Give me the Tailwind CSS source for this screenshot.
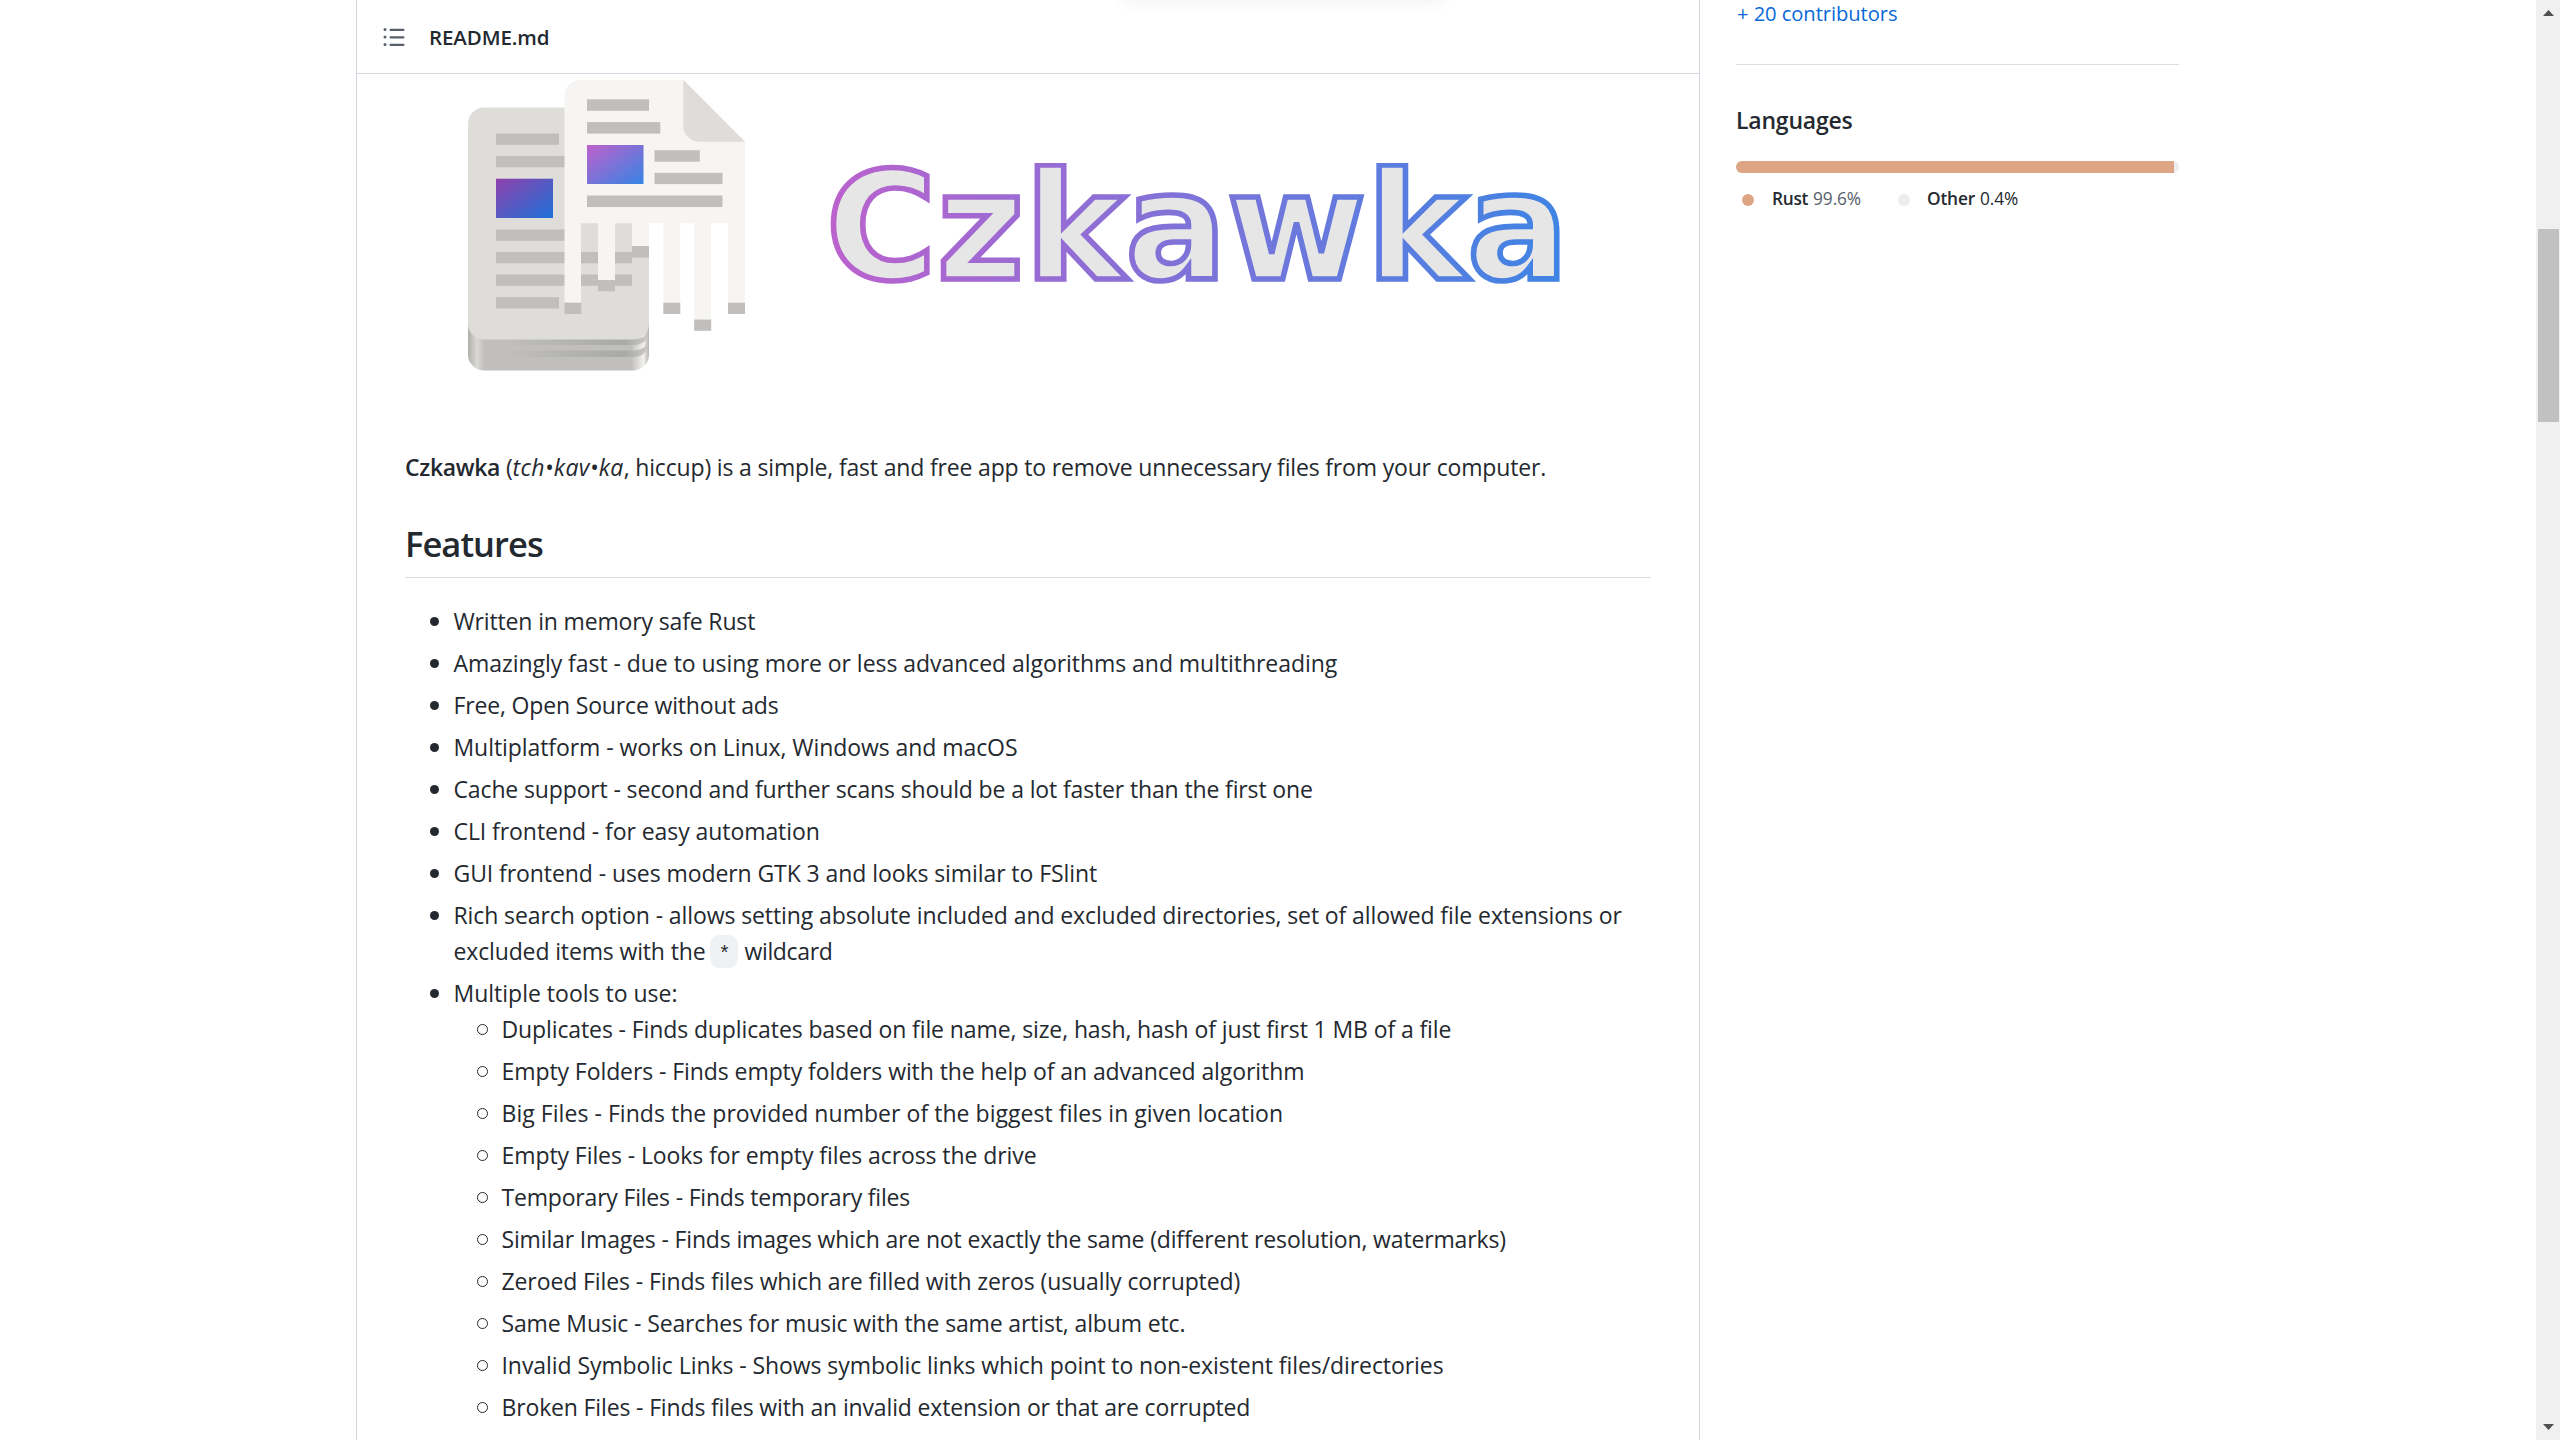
<!DOCTYPE html>
<html lang="en">
<head>
<meta charset="utf-8">
<title>README.md</title>
<script src="https://cdn.jsdelivr.net/npm/@tailwindcss/browser@4"></script>
</head>
<body class="relative flex h-[1440px] w-[2560px] overflow-hidden bg-white font-['Open_Sans','Noto_Sans',sans-serif] text-[#24292f]">
  <!-- shadow cast by a bar above the page -->
  <div class="absolute left-[1122px] -top-[20px] h-[18px] w-[322px] shadow-[0_2px_16px_rgba(0,0,0,0.07)]"></div>

  <main class="ml-[356px] h-full w-[1344px] shrink-0 border-x border-[#d0d7de]">
    <header class="flex h-[74px] items-center border-b border-[#d0d7de] pl-[25px]">
      <svg class="h-6 w-6 fill-[#57606a]" viewBox="0 0 16 16"><path d="M2 4a1 1 0 100-2 1 1 0 000 2zm3.75-1.5a.75.75 0 000 1.5h8.5a.75.75 0 000-1.5h-8.5zm0 5a.75.75 0 000 1.5h8.5a.75.75 0 000-1.5h-8.5zm0 5a.75.75 0 000 1.5h8.5a.75.75 0 000-1.5h-8.5zM3 8a1 1 0 11-2 0 1 1 0 012 0zm-1 6a1 1 0 100-2 1 1 0 000 2z"/></svg>
      <h2 class="mt-px ml-[23px] text-[20.5px] font-semibold tracking-[-0.12px]">README.md</h2>
    </header>

    <svg class="block h-[374px] w-[1342px]" viewBox="357 74 1342 374">
      <defs>
        <linearGradient id="front" x1="0" y1="0" x2="1" y2="1"><stop offset="0" stop-color="#c061cb"/><stop offset="1" stop-color="#3584e4"/></linearGradient>
        <linearGradient id="back" x1="0" y1="0" x2="1" y2="1"><stop offset="0" stop-color="#9141ac"/><stop offset="1" stop-color="#1c71d8"/></linearGradient>
        <linearGradient id="word" gradientUnits="userSpaceOnUse" x1="832" y1="0" x2="1560" y2="0"><stop offset="0" stop-color="#bb62cd"/><stop offset="1" stop-color="#3f84e4"/></linearGradient>
        <linearGradient id="edge" gradientUnits="userSpaceOnUse" x1="468" y1="0" x2="649" y2="0"><stop offset="0" stop-color="#b0b0ac"/><stop offset=".05" stop-color="#dad9d5"/><stop offset=".09" stop-color="#c0bfbb"/><stop offset=".9" stop-color="#c0bfbb"/><stop offset=".97" stop-color="#f2f1ee"/><stop offset="1" stop-color="#b4b3af"/></linearGradient>
        <linearGradient id="page" gradientUnits="userSpaceOnUse" x1="505" y1="0" x2="646" y2="0"><stop offset="0" stop-color="#a9a9a5" stop-opacity="0"/><stop offset=".85" stop-color="#a9a9a5"/><stop offset="1" stop-color="#c8c7c4"/></linearGradient>
        <clipPath id="cap"><rect x="820" y="163" width="760" height="130"/></clipPath>
      </defs>
      <path d="M468 315H649V354.500A16 16 0 0 1 633 370.500H484A16 16 0 0 1 468 354.500Z" fill="url(#edge)"/>
      <path d="M500 339H634Q644 339 647 333V338Q643 345 634 345H500Z" fill="url(#page)"/>
      <path d="M500 350.500H634Q643 350 647 344V349Q643 357 634 357H500Z" fill="url(#page)"/>
      <path d="M484 107.500H633A16 16 0 0 1 649 123.500V323.500A16 16 0 0 1 633 339.500H484A16 16 0 0 1 468 323.500V123.500A16 16 0 0 1 484 107.500Z" fill="#deddda"/>
      <g fill="#c0bfbc">
        <rect x="496" y="133.500" width="63" height="11.300"/><rect x="496" y="156" width="80" height="11.300"/>
        <rect x="496" y="229.500" width="80" height="11.300"/><rect x="496" y="252" width="136" height="11.300"/>
        <rect x="496" y="274.500" width="136" height="11.300"/><rect x="496" y="297.200" width="63" height="11.300"/>
      </g>
      <rect x="496" y="178.700" width="57" height="39.300" fill="url(#back)"/>
      <path d="M580.500 79.700H683.300L745 141.700V302.700H728V223.300H711V319.300H694.200V223.300H680.200V302.700H663.300V223.300H649V246H632V223.300H615V280H598V223.300H581V302.700H564.500V95.700A16 16 0 0 1 580.500 79.700Z" fill="#f6f5f4"/>
      <path d="M683.300 79.700L745 141.700H699.300A16 16 0 0 1 683.300 125.700Z" fill="#deddda"/>
      <g fill="#c0bfbc">
        <rect x="587" y="99.300" width="62" height="11.500"/><rect x="587" y="122.100" width="73.300" height="11.500"/>
        <rect x="654.500" y="150.200" width="45.300" height="11.500"/><rect x="654.500" y="172.800" width="68" height="11.300"/>
        <rect x="587" y="195.500" width="135.500" height="11.500"/>
        <rect x="564.500" y="302.700" width="16.800" height="11.300"/><rect x="598" y="280" width="17" height="11.300"/>
        <rect x="632" y="246" width="17" height="11.500"/><rect x="663.300" y="302.700" width="17" height="11.300"/>
        <rect x="694.200" y="319.500" width="17" height="11.300"/><rect x="728" y="302.700" width="17" height="11.300"/>
      </g>
      <rect x="587" y="145" width="56.500" height="39" fill="url(#front)"/>
      <text x="826" y="278.500" class="font-['DejaVu_Sans',sans-serif] text-[150.5px] font-bold tracking-[0.35px]" fill="#e6e6e6" stroke="url(#word)" stroke-width="5.600" clip-path="url(#cap)">Czkawka</text>
    </svg>

    <article class="w-[1294px] pl-12 text-[23px] leading-9">
      <p class="pt-px tracking-[-0.17px]"><b class="font-semibold tracking-[-0.32px]">Czkawka</b> (<i class="tracking-[0.35px]">tch•kav•ka</i>, hiccup) is a simple, fast and free app to remove unnecessary files from your computer.</p>
      <h2 class="mt-9 h-[57px] border-b border-[#d8dee4] text-[34.500px] leading-[45px] font-semibold tracking-[-0.95px]">Features</h2>
      <ul class="mt-[25px] flex w-[1250px] flex-col gap-1.5 pl-[48.5px] whitespace-nowrap">
        <li class="relative tracking-[-0.15px] before:absolute before:-left-[23.5px] before:top-[14px] before:size-[9px] before:rounded-full before:bg-[#24292f]">Written in memory safe Rust</li>
        <li class="relative tracking-[-0.05px] before:absolute before:-left-[23.5px] before:top-[14px] before:size-[9px] before:rounded-full before:bg-[#24292f]">Amazingly fast - due to using more or less advanced algorithms and multithreading</li>
        <li class="relative tracking-[-0.16px] before:absolute before:-left-[23.5px] before:top-[14px] before:size-[9px] before:rounded-full before:bg-[#24292f]">Free, Open Source without ads</li>
        <li class="relative tracking-[-0.07px] before:absolute before:-left-[23.5px] before:top-[14px] before:size-[9px] before:rounded-full before:bg-[#24292f]">Multiplatform - works on Linux, Windows and macOS</li>
        <li class="relative tracking-[-0.135px] before:absolute before:-left-[23.5px] before:top-[14px] before:size-[9px] before:rounded-full before:bg-[#24292f]">Cache support - second and further scans should be a lot faster than the first one</li>
        <li class="relative tracking-[-0.07px] before:absolute before:-left-[23.5px] before:top-[14px] before:size-[9px] before:rounded-full before:bg-[#24292f]">CLI frontend - for easy automation</li>
        <li class="relative tracking-[-0.08px] before:absolute before:-left-[23.5px] before:top-[14px] before:size-[9px] before:rounded-full before:bg-[#24292f]">GUI frontend - uses modern GTK 3 and looks similar to FSlint</li>
        <li class="relative h-[72px] tracking-[-0.1px] before:absolute before:-left-[23.5px] before:top-[14px] before:size-[9px] before:rounded-full before:bg-[#24292f]">Rich search option - allows setting absolute included and excluded directories, set of allowed file extensions or<br>
          <span class="flex items-center tracking-[-0.14px]"><span>excluded items with the</span><code class="mr-[6px] ml-[5px] flex h-[33px] w-7 items-center justify-center rounded-[9px] bg-[#eff1f3] pt-[7px] font-['Liberation_Mono',monospace] text-[20px] leading-none">*</code><span class="tracking-[-0.35px]">wildcard</span></span></li>
        <li class="relative before:absolute before:-left-[23.5px] before:top-[14px] before:size-[9px] before:rounded-full before:bg-[#24292f]">Multiple tools to use:
          <ul class="flex flex-col gap-1.5 pl-12">
            <li class="relative tracking-[-0.11px] before:absolute before:-left-[24.5px] before:top-[13px] before:size-[11px] before:rounded-full before:border before:border-[#24292f]">Duplicates - Finds duplicates based on file name, size, hash, hash of just first 1 MB of a file</li>
            <li class="relative tracking-[-0.08px] before:absolute before:-left-[24.5px] before:top-[13px] before:size-[11px] before:rounded-full before:border before:border-[#24292f]">Empty Folders - Finds empty folders with the help of an advanced algorithm</li>
            <li class="relative tracking-[0.045px] before:absolute before:-left-[24.5px] before:top-[13px] before:size-[11px] before:rounded-full before:border before:border-[#24292f]">Big Files - Finds the provided number of the biggest files in given location</li>
            <li class="relative tracking-[-0.08px] before:absolute before:-left-[24.5px] before:top-[13px] before:size-[11px] before:rounded-full before:border before:border-[#24292f]">Empty Files - Looks for empty files across the drive</li>
            <li class="relative tracking-[-0.19px] before:absolute before:-left-[24.5px] before:top-[13px] before:size-[11px] before:rounded-full before:border before:border-[#24292f]">Temporary Files - Finds temporary files</li>
            <li class="relative tracking-[-0.155px] before:absolute before:-left-[24.5px] before:top-[13px] before:size-[11px] before:rounded-full before:border before:border-[#24292f]">Similar Images - Finds images which are not exactly the same (different resolution, watermarks)</li>
            <li class="relative tracking-[-0.105px] before:absolute before:-left-[24.5px] before:top-[13px] before:size-[11px] before:rounded-full before:border before:border-[#24292f]">Zeroed Files - Finds files which are filled with zeros (usually corrupted)</li>
            <li class="relative tracking-[-0.14px] before:absolute before:-left-[24.5px] before:top-[13px] before:size-[11px] before:rounded-full before:border before:border-[#24292f]">Same Music - Searches for music with the same artist, album etc.</li>
            <li class="relative tracking-[-0.07px] before:absolute before:-left-[24.5px] before:top-[13px] before:size-[11px] before:rounded-full before:border before:border-[#24292f]">Invalid Symbolic Links - Shows symbolic links which point to non-existent files/directories</li>
            <li class="relative tracking-[-0.15px] before:absolute before:-left-[24.5px] before:top-[13px] before:size-[11px] before:rounded-full before:border before:border-[#24292f]">Broken Files - Finds files with an invalid extension or that are corrupted</li>
          </ul>
        </li>
      </ul>
    </article>
  </main>

  <aside class="ml-9 w-[443px] shrink-0">
    <div class="h-[65px] border-b border-[#d8dee4] pl-px text-[20.200px] leading-[27px] tracking-[-0.08px] text-[#0969da]">+ 20 contributors</div>
    <h2 class="mt-[37px] h-9 text-[23px] leading-9 font-semibold tracking-[-0.2px]">Languages</h2>
    <div class="mt-[23px] flex h-3 overflow-hidden rounded-full bg-[#ededed]"><div class="w-[438px] bg-[#dea584]"></div></div>
    <div class="mt-[11px] flex h-[30px] items-center pl-1.5 text-[17.300px] leading-[30px]">
      <i class="mt-px mr-[18px] size-3 rounded-full bg-[#dea584]"></i><b class="mr-[5px] font-semibold tracking-[-0.3px]">Rust</b><span class="w-[85px] tracking-[-0.1px] text-[#57606a]">99.6%</span>
      <i class="mt-px mr-[17px] size-3 rounded-full bg-[#ededed]"></i><b class="mr-[5px] font-semibold tracking-[-0.2px]">Other</b><span class="tracking-[-0.1px]">0.4%</span>
    </div>
  </aside>

  <div class="ml-auto flex h-full w-6 flex-col items-center bg-[#f0f0f0]">
    <svg class="mt-[10px] h-1.5 w-[11px] fill-[#505050]" viewBox="0 0 11 6"><path d="M5.500 0L11 6H0z"/></svg>
    <div class="mt-[213px] h-[193px] w-[21px] bg-[#c1c1c1]"></div>
    <svg class="mt-auto mb-[10px] h-1.5 w-[11px] fill-[#505050]" viewBox="0 0 11 6"><path d="M0 0H11L5.500 6z"/></svg>
  </div>
</body>
</html>
